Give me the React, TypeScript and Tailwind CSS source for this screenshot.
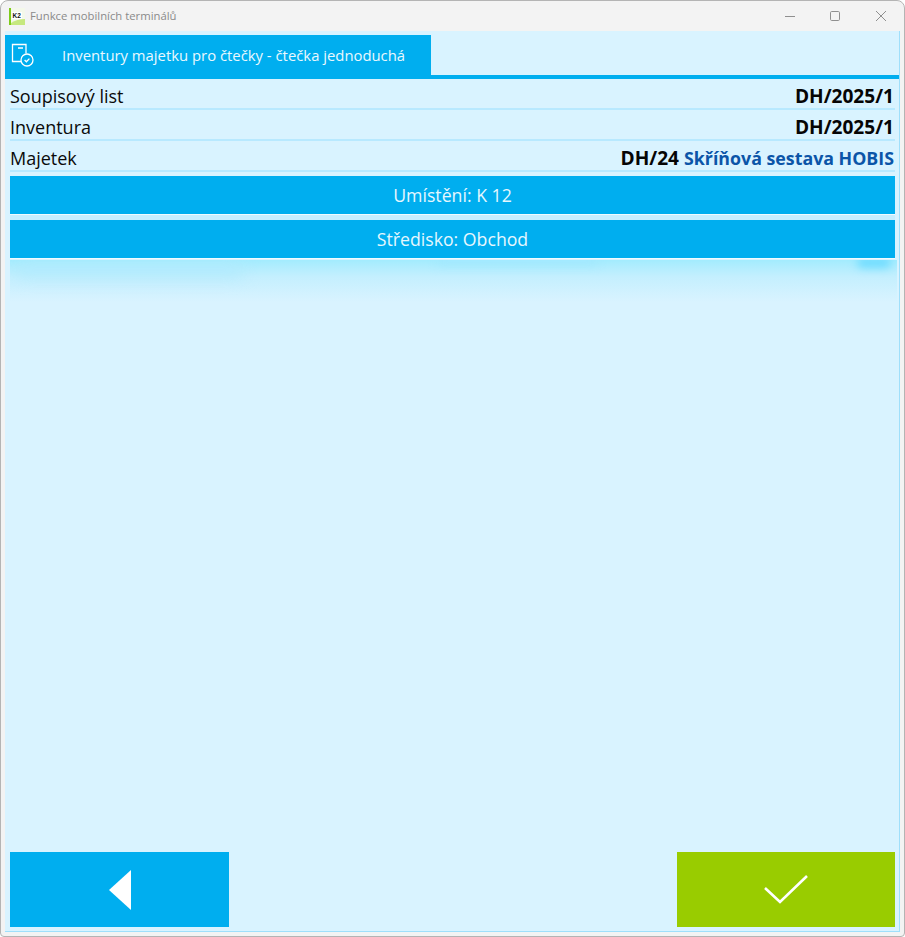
import type { ReactNode } from "react";

const font = { fontFamily: '"Open Sans", "Noto Sans", sans-serif' };

function Row({ label, children }: { label: string; children: ReactNode }) {
  return (
    <div className="flex h-[31px] items-center justify-between border-b-2 border-[#b8e9ff] pt-[6px] pr-[1px] leading-none">
      <span className="mb-[2px] text-[18px] text-[#0a0a0a]">{label}</span>
      <span className="text-[19.1px] font-bold text-[#050505]">{children}</span>
    </div>
  );
}

function InfoBar({ children }: { children: ReactNode }) {
  return (
    <div className="flex h-[39px] items-center justify-center border-b border-[#f0fbff] bg-[#00aeef] pt-[1px] text-[17.7px] text-[#e6f7fe]">
      {children}
    </div>
  );
}

export default function App() {
  return (
    <div
      className="flex h-[937px] w-[905px] flex-col overflow-hidden rounded-t-lg rounded-b-[4px] border border-[#b4b4b4] bg-[#f3f3f3]"
      style={font}
    >
      <div className="flex h-[30px] shrink-0 items-center pl-[8px]">
        <svg width="16" height="17" viewBox="0 0 16 17" className="shrink-0">
          <rect width="16" height="17" fill="#f4f8ea" />
          <rect width="2" height="17" fill="#7ecb1a" />
          <path d="M2 17 L16 17 L16 11 Q8 11 2 15 Z" fill="#c6e87e" />
          <rect x="3" y="4" width="10" height="7" fill="#ffffff" />
          <text x="3.5" y="10" fontSize="6.5" fontWeight="700" fill="#111" fontFamily="Liberation Sans">K2</text>
        </svg>
        <span className="ml-[5px] text-[11.3px] text-[#8a8a8a]">Funkce mobilních terminálů</span>
        <div className="ml-auto flex items-center pr-[17px] text-[#8f8f8f]">
          <svg width="12" height="12" viewBox="0 0 12 12" fill="none" stroke="currentColor">
            <path d="M1 6.5h10" />
          </svg>
          <svg width="12" height="12" viewBox="0 0 12 12" fill="none" stroke="currentColor" className="ml-[33px]">
            <rect x="1.5" y="1.5" width="9" height="9" rx="1.2" />
          </svg>
          <svg width="12" height="12" viewBox="0 0 12 12" fill="none" stroke="currentColor" className="ml-[34px]">
            <path d="M1 1l10 10M11 1L1 11" />
          </svg>
        </div>
      </div>

      <div className="mx-[4px] mb-[4px] flex min-h-0 flex-1 flex-col border-r border-b border-[#9fdffb] bg-[#d9f3ff]">
        <div className="flex h-[44px] shrink-0 items-end">
          <div className="flex h-[40px] w-[426px] items-center bg-[#00aeef] text-[14.85px] text-[#eaf8fe]">
            <svg width="26" height="26" viewBox="0 0 26 26" fill="none" stroke="#ffffff" strokeWidth="1.3" className="ml-[5px] shrink-0">
              <path d="M11 19.5H2.5V2.5H16V11.5" />
              <path d="M8 6h5" />
              <circle cx="17" cy="18" r="6" />
              <path d="M14.6 18l1.8 1.8 3-3.2" />
            </svg>
            <span className="ml-[26px]">Inventury majetku pro čtečky - čtečka jednoduchá</span>
          </div>
        </div>
        <div className="h-[4px] shrink-0 bg-[#00aeef]" />

        <div className="mr-[4px] flex min-h-0 flex-1 flex-col pl-[5px]">
          <Row label="Soupisový list">DH/2025/1</Row>
          <Row label="Inventura">DH/2025/1</Row>
          <Row label="Majetek">
            DH/24 <span className="text-[17.8px] text-[#0b55a8]">Skříňová sestava HOBIS</span>
          </Row>

          <div className="mt-[4px] flex flex-col gap-[5px] bg-[#c6eeff]">
            <InfoBar>Umístění: K 12</InfoBar>
            <InfoBar>Středisko: Obchod</InfoBar>
          </div>

          {/* blurred shadow under the bars */}
          <div className="relative -mr-[2px] mt-[1px] h-[42px] shrink-0 overflow-hidden bg-gradient-to-b from-[#a3ecfe] via-[#c4effe] via-40% to-[#d9f3ff]">
            <div className="absolute top-[-3px] right-[6px] h-[11px] w-[34px] rounded-full bg-[#6fdcff] blur-[4px]" />
            <div className="absolute top-[4px] left-[4px] h-[12px] w-[230px] rounded-full bg-[#b0eafd] blur-[8px]" />
            <div className="absolute top-[-3px] right-[300px] h-[8px] w-[160px] bg-[#a2e8fe] blur-[5px]" />
          </div>

          <div className="mt-auto mb-[4px] flex justify-between">
            <button className="flex h-[75px] w-[219px] items-center justify-center bg-[#00aeef]">
              <svg width="24" height="42" viewBox="0 0 24 42">
                <path d="M1 21L23 1V41Z" fill="#ffffff" />
              </svg>
            </button>
            <button className="flex h-[75px] w-[218px] items-center justify-center bg-[#99cc00]">
              <svg width="44" height="30" viewBox="0 0 44 30" fill="none" stroke="#ffffff" strokeWidth="2.6">
                <path d="M1 13l15 14L43 1" />
              </svg>
            </button>
          </div>
        </div>
      </div>
    </div>
  );
}
